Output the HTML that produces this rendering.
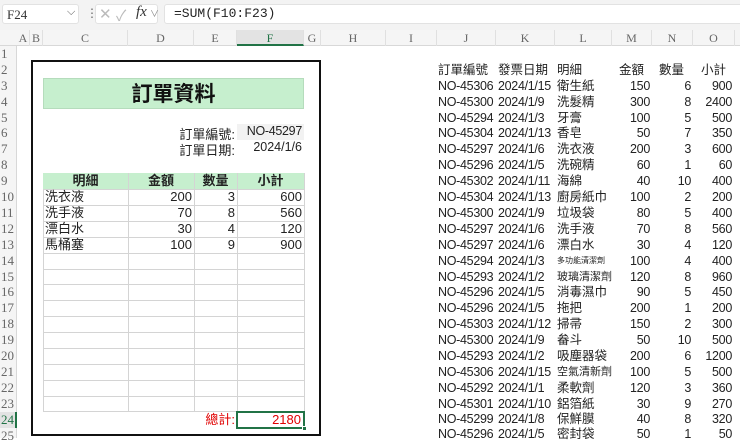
<!DOCTYPE html>
<html><head><meta charset="utf-8"><style>
*{margin:0;padding:0;box-sizing:border-box}
body{width:740px;height:438px;overflow:hidden;background:#fff;font-family:"Liberation Sans","Noto Sans CJK TC",sans-serif;font-size:13px;color:#222;position:relative}
.a{position:absolute;white-space:nowrap}
.top{left:0;top:0;width:740px;height:30px;background:#f3f3f3}
.box{background:#fff;border:1px solid #e2e2e2;border-radius:3px;height:20px;top:4px}
.ch{top:30px;height:16px;background:#f5f5f5;border-bottom:1px solid #d8d8d8;left:0;width:740px}
.cl{top:30px;height:16px;line-height:16px;text-align:center;font-family:"Liberation Serif",serif;font-size:12px;color:#666;border-right:1px solid #e0e0e0}
.rh{left:0;width:17px;background:#f5f5f5;border-right:1px solid #d8d8d8;top:46px;height:392px}
.rn{left:0;width:17px;height:16px;line-height:16px;font-family:"Liberation Serif",serif;font-size:13px;color:#666;text-align:left;padding-left:1px}
.c{height:16px;line-height:16px;padding:0 2px}
.r{text-align:right}
.d{position:absolute;left:0;width:740px;height:16px;line-height:16px;font-size:12.5px;letter-spacing:-0.3px}
.d span{position:absolute;white-space:nowrap}
.d .j{left:438px}.d .k{left:498px}.d .l{left:557px;letter-spacing:0}
.d .m{right:90px}.d .n{right:49px}.d .o{right:8px}
</style></head><body>
<div class="a top"></div>
<div class="a box" style="left:2px;width:77px"></div>
<div class="a" style="left:7px;top:7px;font-family:'Liberation Serif',serif;font-size:13px;color:#333">F24</div>
<div class="a" style="left:67px;top:6px;font-size:11px;color:#555">&#x2335;</div>
<div class="a" style="left:86px;top:6px;color:#666;font-size:12px">&#x22EE;</div>
<div class="a box" style="left:95px;width:63px"></div>
<div class="a" style="left:99px;top:5px;color:#bbb;font-size:15px">&#x2715;</div>
<div class="a" style="left:116px;top:5px;color:#bbb;font-size:15px">&#x2713;</div>
<div class="a" style="left:136px;top:4px;font-family:'Liberation Serif',serif;font-style:italic;font-size:15px;color:#333">fx</div>
<div class="a" style="left:150px;top:7px;color:#888;font-size:9px">&#x2228;</div>
<div class="a box" style="left:164px;width:580px"></div>
<div class="a" style="left:174px;top:6px;font-family:'Liberation Mono',monospace;font-size:13px;color:#222">=SUM(F10:F23)</div>

<div class="a ch"></div>
<div class="a cl" style="left:17px;width:13px">A</div>
<div class="a cl" style="left:30px;width:13px">B</div>
<div class="a cl" style="left:43px;width:85px">C</div>
<div class="a cl" style="left:128px;width:66px">D</div>
<div class="a cl" style="left:194px;width:43px">E</div>
<div class="a cl" style="left:237px;width:67px;background:#e3e3e3;border-bottom:2px solid #217346;color:#217346">F</div>
<div class="a cl" style="left:304px;width:17px">G</div>
<div class="a cl" style="left:321px;width:65px">H</div>
<div class="a cl" style="left:386px;width:51px">I</div>
<div class="a cl" style="left:437px;width:59px">J</div>
<div class="a cl" style="left:496px;width:59px">K</div>
<div class="a cl" style="left:555px;width:57px">L</div>
<div class="a cl" style="left:612px;width:40px">M</div>
<div class="a cl" style="left:652px;width:41px">N</div>
<div class="a cl" style="left:693px;width:42px">O</div>

<div class="a rh"></div>
<div class="a rn" style="top:46px">1</div><div class="a rn" style="top:62px">2</div><div class="a rn" style="top:78px">3</div><div class="a rn" style="top:94px">4</div><div class="a rn" style="top:110px">5</div><div class="a rn" style="top:125px">6</div><div class="a rn" style="top:141px">7</div><div class="a rn" style="top:157px">8</div><div class="a rn" style="top:173px">9</div><div class="a rn" style="top:189px">10</div><div class="a rn" style="top:205px">11</div><div class="a rn" style="top:221px">12</div><div class="a rn" style="top:237px">13</div><div class="a rn" style="top:253px">14</div><div class="a rn" style="top:269px">15</div><div class="a rn" style="top:284px">16</div><div class="a rn" style="top:300px">17</div><div class="a rn" style="top:316px">18</div><div class="a rn" style="top:332px">19</div><div class="a rn" style="top:348px">20</div><div class="a rn" style="top:364px">21</div><div class="a rn" style="top:380px">22</div><div class="a rn" style="top:396px">23</div>
<div class="a rn" style="top:412px;background:#e3e3e3;color:#217346;border-right:2px solid #217346">24</div>
<div class="a rn" style="top:428px">25</div>

<div class="a" style="left:31px;top:60px;width:290px;height:376px;border:2px solid #111"></div>
<div class="a" style="left:43px;top:78px;width:261px;height:31px;background:#c6efce;border:1px solid #b5dcbc;text-align:center;line-height:29px;font-size:21px;font-weight:bold;color:#111;font-family:'Noto Sans CJK TC',sans-serif">訂單資料</div>
<div class="a" style="left:150px;top:124px;width:85px;text-align:right">訂單編號:</div>
<div class="a" style="left:237px;top:124px;width:67px;height:16px;background:#f2f2f2;text-align:right;padding-right:2px;font-size:12.5px;letter-spacing:-0.3px">NO-45297</div>
<div class="a" style="left:150px;top:140px;width:85px;text-align:right">訂單日期:</div>
<div class="a" style="left:237px;top:140px;width:67px;text-align:right;padding-right:2px;font-size:12.5px">2024/1/6</div>

<div class="a" style="left:43px;top:173px;width:261px;height:239px;border-left:1px solid #d4d4d4;border-top:1px solid #d4d4d4"></div>
<div class="a" style="left:43px;top:173px;width:261px;height:16px;background:#c6efce"></div>
<div class="a" style="left:128px;top:173px;width:1px;height:239px;background:#d4d4d4"></div>
<div class="a" style="left:194px;top:173px;width:1px;height:239px;background:#d4d4d4"></div>
<div class="a" style="left:237px;top:173px;width:1px;height:239px;background:#d4d4d4"></div>
<div class="a" style="left:304px;top:173px;width:1px;height:239px;background:#d4d4d4"></div>
<div class="a" style="left:43px;top:189px;width:261px;height:1px;background:#d4d4d4"></div>
<div class="a" style="left:43px;top:205px;width:261px;height:1px;background:#d4d4d4"></div>
<div class="a" style="left:43px;top:221px;width:261px;height:1px;background:#d4d4d4"></div>
<div class="a" style="left:43px;top:237px;width:261px;height:1px;background:#d4d4d4"></div>
<div class="a" style="left:43px;top:253px;width:261px;height:1px;background:#d4d4d4"></div>
<div class="a" style="left:43px;top:269px;width:261px;height:1px;background:#d4d4d4"></div>
<div class="a" style="left:43px;top:284px;width:261px;height:1px;background:#d4d4d4"></div>
<div class="a" style="left:43px;top:300px;width:261px;height:1px;background:#d4d4d4"></div>
<div class="a" style="left:43px;top:316px;width:261px;height:1px;background:#d4d4d4"></div>
<div class="a" style="left:43px;top:332px;width:261px;height:1px;background:#d4d4d4"></div>
<div class="a" style="left:43px;top:348px;width:261px;height:1px;background:#d4d4d4"></div>
<div class="a" style="left:43px;top:364px;width:261px;height:1px;background:#d4d4d4"></div>
<div class="a" style="left:43px;top:380px;width:261px;height:1px;background:#d4d4d4"></div>
<div class="a" style="left:43px;top:396px;width:261px;height:1px;background:#d4d4d4"></div>
<div class="a" style="left:43px;top:411px;width:261px;height:1px;background:#d4d4d4"></div>

<div class="a c" style="left:43px;top:173px;width:85px;text-align:center;font-weight:bold">明細</div>
<div class="a c" style="left:128px;top:173px;width:66px;text-align:center;font-weight:bold">金額</div>
<div class="a c" style="left:194px;top:173px;width:43px;text-align:center;font-weight:bold">數量</div>
<div class="a c" style="left:237px;top:173px;width:67px;text-align:center;font-weight:bold">小計</div>

<div class="a c" style="left:43px;top:189px">洗衣液</div><div class="a c r" style="left:128px;top:189px;width:66px">200</div><div class="a c r" style="left:194px;top:189px;width:43px">3</div><div class="a c r" style="left:237px;top:189px;width:67px">600</div>
<div class="a c" style="left:43px;top:205px">洗手液</div><div class="a c r" style="left:128px;top:205px;width:66px">70</div><div class="a c r" style="left:194px;top:205px;width:43px">8</div><div class="a c r" style="left:237px;top:205px;width:67px">560</div>
<div class="a c" style="left:43px;top:221px">漂白水</div><div class="a c r" style="left:128px;top:221px;width:66px">30</div><div class="a c r" style="left:194px;top:221px;width:43px">4</div><div class="a c r" style="left:237px;top:221px;width:67px">120</div>
<div class="a c" style="left:43px;top:237px">馬桶塞</div><div class="a c r" style="left:128px;top:237px;width:66px">100</div><div class="a c r" style="left:194px;top:237px;width:43px">9</div><div class="a c r" style="left:237px;top:237px;width:67px">900</div>

<div class="a c r" style="left:150px;top:412px;width:87px;color:#e00000">總計:</div>
<div class="a c r" style="left:236px;top:411px;width:69px;height:18px;border:2px solid #217346;color:#e00000;line-height:14px">2180</div>
<div class="a" style="left:302px;top:426px;width:5px;height:5px;background:#217346;border:1px solid #fff"></div>

<div class="d" style="top:62px"><span class="j" style="letter-spacing:0">訂單編號</span><span class="k" style="letter-spacing:0">發票日期</span><span class="l">明細</span><span class="m" style="right:96px;letter-spacing:0">金額</span><span class="n" style="right:56px;letter-spacing:0">數量</span><span class="o" style="right:14px;letter-spacing:0">小計</span></div>
<div class="d" style="top:78px"><span class="j">NO-45306</span><span class="k">2024/1/15</span><span class="l">衛生紙</span><span class="m">150</span><span class="n">6</span><span class="o">900</span></div>
<div class="d" style="top:94px"><span class="j">NO-45300</span><span class="k">2024/1/9</span><span class="l">洗髮精</span><span class="m">300</span><span class="n">8</span><span class="o">2400</span></div>
<div class="d" style="top:110px"><span class="j">NO-45294</span><span class="k">2024/1/3</span><span class="l">牙膏</span><span class="m">100</span><span class="n">5</span><span class="o">500</span></div>
<div class="d" style="top:125px"><span class="j">NO-45304</span><span class="k">2024/1/13</span><span class="l">香皂</span><span class="m">50</span><span class="n">7</span><span class="o">350</span></div>
<div class="d" style="top:141px"><span class="j">NO-45297</span><span class="k">2024/1/6</span><span class="l">洗衣液</span><span class="m">200</span><span class="n">3</span><span class="o">600</span></div>
<div class="d" style="top:157px"><span class="j">NO-45296</span><span class="k">2024/1/5</span><span class="l">洗碗精</span><span class="m">60</span><span class="n">1</span><span class="o">60</span></div>
<div class="d" style="top:173px"><span class="j">NO-45302</span><span class="k">2024/1/11</span><span class="l">海綿</span><span class="m">40</span><span class="n">10</span><span class="o">400</span></div>
<div class="d" style="top:189px"><span class="j">NO-45304</span><span class="k">2024/1/13</span><span class="l">廚房紙巾</span><span class="m">100</span><span class="n">2</span><span class="o">200</span></div>
<div class="d" style="top:205px"><span class="j">NO-45300</span><span class="k">2024/1/9</span><span class="l">垃圾袋</span><span class="m">80</span><span class="n">5</span><span class="o">400</span></div>
<div class="d" style="top:221px"><span class="j">NO-45297</span><span class="k">2024/1/6</span><span class="l">洗手液</span><span class="m">70</span><span class="n">8</span><span class="o">560</span></div>
<div class="d" style="top:237px"><span class="j">NO-45297</span><span class="k">2024/1/6</span><span class="l">漂白水</span><span class="m">30</span><span class="n">4</span><span class="o">120</span></div>
<div class="d" style="top:253px"><span class="j">NO-45294</span><span class="k">2024/1/3</span><span class="l" style="font-size:8px">多功能清潔劑</span><span class="m">100</span><span class="n">4</span><span class="o">400</span></div>
<div class="d" style="top:269px"><span class="j">NO-45293</span><span class="k">2024/1/2</span><span class="l" style="font-size:11px">玻璃清潔劑</span><span class="m">120</span><span class="n">8</span><span class="o">960</span></div>
<div class="d" style="top:284px"><span class="j">NO-45296</span><span class="k">2024/1/5</span><span class="l">消毒濕巾</span><span class="m">90</span><span class="n">5</span><span class="o">450</span></div>
<div class="d" style="top:300px"><span class="j">NO-45296</span><span class="k">2024/1/5</span><span class="l">拖把</span><span class="m">200</span><span class="n">1</span><span class="o">200</span></div>
<div class="d" style="top:316px"><span class="j">NO-45303</span><span class="k">2024/1/12</span><span class="l">掃帚</span><span class="m">150</span><span class="n">2</span><span class="o">300</span></div>
<div class="d" style="top:332px"><span class="j">NO-45300</span><span class="k">2024/1/9</span><span class="l">畚斗</span><span class="m">50</span><span class="n">10</span><span class="o">500</span></div>
<div class="d" style="top:348px"><span class="j">NO-45293</span><span class="k">2024/1/2</span><span class="l">吸塵器袋</span><span class="m">200</span><span class="n">6</span><span class="o">1200</span></div>
<div class="d" style="top:364px"><span class="j">NO-45306</span><span class="k">2024/1/15</span><span class="l" style="font-size:11px">空氣清新劑</span><span class="m">100</span><span class="n">5</span><span class="o">500</span></div>
<div class="d" style="top:380px"><span class="j">NO-45292</span><span class="k">2024/1/1</span><span class="l">柔軟劑</span><span class="m">120</span><span class="n">3</span><span class="o">360</span></div>
<div class="d" style="top:396px"><span class="j">NO-45301</span><span class="k">2024/1/10</span><span class="l">鋁箔紙</span><span class="m">30</span><span class="n">9</span><span class="o">270</span></div>
<div class="d" style="top:411px"><span class="j">NO-45299</span><span class="k">2024/1/8</span><span class="l">保鮮膜</span><span class="m">40</span><span class="n">8</span><span class="o">320</span></div>
<div class="d" style="top:426px"><span class="j">NO-45296</span><span class="k">2024/1/5</span><span class="l">密封袋</span><span class="m">50</span><span class="n">1</span><span class="o">50</span></div>
</body></html>
